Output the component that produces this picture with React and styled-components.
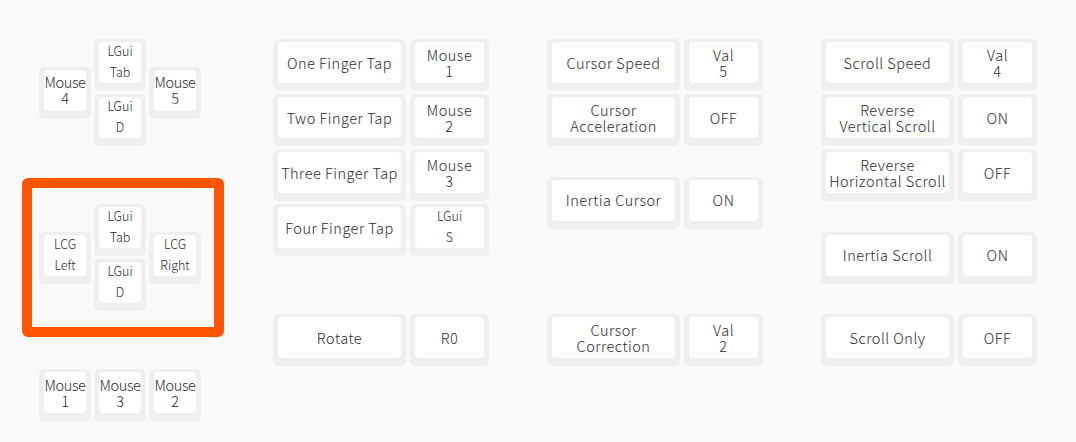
import styled, { createGlobalStyle } from "styled-components";

const UNIT = 55;

const GlobalStyle = createGlobalStyle`
  html, body {
    margin: 0;
    background: #fafafa;
  }
  body {
    font-family: "Noto Sans CJK JP", "Noto Sans", sans-serif;
    font-weight: 300;
    color: #2b2b2b;
  }
`;

const Page = styled.div`
  display: flex;
  align-items: flex-start;
  box-sizing: border-box;
  height: 442px;
  padding: 39px 0 0 39px;
`;

const MouseColumn = styled.div`
  display: flex;
  flex-direction: column;
  gap: 58px;
  width: 162px;
  margin-right: 72px;
`;

const Cluster = styled.div`
  position: relative;
  display: flex;
  gap: 3px;
`;

const ClusterCol = styled.div`
  display: flex;
  flex-direction: column;
  gap: 3px;
  padding-top: ${p => (p.$offset ? UNIT / 2 : 0)}px;
`;

const Selection = styled.div`
  position: absolute;
  left: -17px;
  top: -26px;
  width: 202px;
  height: 159px;
  box-sizing: border-box;
  border: 10px solid #ff5500;
  border-radius: 6px;
  pointer-events: none;
`;

const Groups = styled.div`
  display: flex;
  gap: 58px;
`;

const Group = styled.div`
  display: flex;
  flex-direction: column;
  gap: 3px;
  width: 216px;
`;

const Row = styled.div`
  display: flex;
  gap: 4px;
  margin-top: ${p => (p.$skip || 0) * UNIT}px;
`;

const KeyBody = styled.div`
  flex-shrink: 0;
  box-sizing: border-box;
  width: ${p => p.$w}px;
  height: 52px;
  padding: 3px 5px 8px;
  background: #efefef;
  border-radius: 5px;
`;

const Cap = styled.div`
  height: 100%;
  box-sizing: border-box;
  display: flex;
  align-items: center;
  justify-content: center;
  padding-bottom: ${p => (p.$legend ? 3 : 0)}px;
  background: #fff;
  border-radius: 4px;
`;

const Legend = styled.span`
  text-align: center;
  white-space: pre;
  font-size: ${p => (p.$legend ? 12.5 : 14.5)}px;
  line-height: ${p => (p.$legend ? 21 : 16)}px;
  letter-spacing: ${p => (p.$tight ? -0.4 : p.$legend ? 0 : 0.5)}px;
`;

const Key = ({ w = 52, label, legend }) => (
  <KeyBody $w={w}>
    <Cap $legend={legend}>
      <Legend $legend={legend} $tight={w === 52 && !legend}>
        {label}
      </Legend>
    </Cap>
  </KeyBody>
);

const MouseCluster = ({ left, right, selected }) => (
  <Cluster>
    {selected && <Selection />}
    <ClusterCol $offset>
      <Key label={left.label} legend={left.legend} />
    </ClusterCol>
    <ClusterCol>
      <Key label={"LGui\nTab"} legend />
      <Key label={"LGui\nD"} legend />
    </ClusterCol>
    <ClusterCol $offset>
      <Key label={right.label} legend={right.legend} />
    </ClusterCol>
  </Cluster>
);

const groups = [
  [
    { name: "One Finger Tap", value: "Mouse\n1" },
    { name: "Two Finger Tap", value: "Mouse\n2" },
    { name: "Three Finger Tap", value: "Mouse\n3" },
    { name: "Four Finger Tap", value: "LGui\nS", legend: true },
    { name: "Rotate", value: "R0", skip: 1 },
  ],
  [
    { name: "Cursor Speed", value: "Val\n5" },
    { name: "Cursor\nAcceleration", value: "OFF" },
    { name: "Inertia Cursor", value: "ON", skip: 0.5 },
    { name: "Cursor\nCorrection", value: "Val\n2", skip: 1.5 },
  ],
  [
    { name: "Scroll Speed", value: "Val\n4" },
    { name: "Reverse\nVertical Scroll", value: "ON" },
    { name: "Reverse\nHorizontal Scroll", value: "OFF" },
    { name: "Inertia Scroll", value: "ON", skip: 0.5 },
    { name: "Scroll Only", value: "OFF", skip: 0.5 },
  ],
];

export default function App() {
  return (
    <>
      <GlobalStyle />
      <Page>
        <MouseColumn>
          <MouseCluster
            left={{ label: "Mouse\n4" }}
            right={{ label: "Mouse\n5" }}
          />
          <MouseCluster
            selected
            left={{ label: "LCG\nLeft", legend: true }}
            right={{ label: "LCG\nRight", legend: true }}
          />
          <Cluster>
            <Key label={"Mouse\n1"} />
            <Key label={"Mouse\n3"} />
            <Key label={"Mouse\n2"} />
          </Cluster>
        </MouseColumn>

        <Groups>
          {groups.map((rows, g) => (
            <Group key={g}>
              {rows.map(row => (
                <Row key={row.name} $skip={row.skip}>
                  <Key w={133} label={row.name} />
                  <Key w={79} label={row.value} legend={row.legend} />
                </Row>
              ))}
            </Group>
          ))}
        </Groups>
      </Page>
    </>
  );
}
